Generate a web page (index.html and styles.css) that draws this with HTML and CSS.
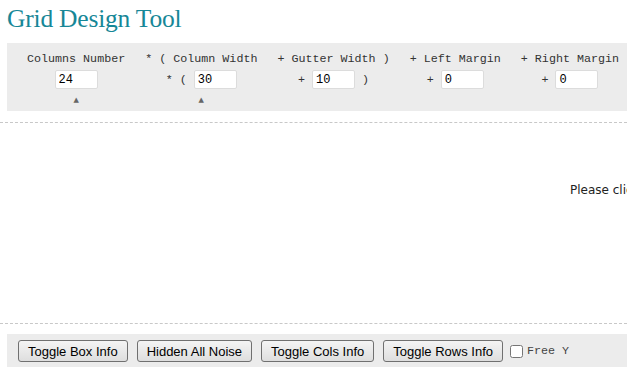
FILE: index.html
```html
<!DOCTYPE html>
<html lang="en">
<head>
    <meta charset="UTF-8">
    <title>Grid Design Tool</title>
    <link rel="stylesheet" href="styles.css">
</head>
<body>
    <h1 class="title">Grid Design Tool</h1>

    <div class="settings">
        <div class="field">
            <div class="label">Columns Number</div>
            <div class="entry"><input type="text" value="24"></div>
            <div class="arrow">&#9650;</div>
        </div>
        <div class="field">
            <div class="label">* ( Column Width</div>
            <div class="entry">* ( <input type="text" value="30"></div>
            <div class="arrow">&#9650;</div>
        </div>
        <div class="field">
            <div class="label">+ Gutter Width )</div>
            <div class="entry">+ <input type="text" value="10"> )</div>
        </div>
        <div class="field">
            <div class="label">+ Left Margin</div>
            <div class="entry">+ <input type="text" value="0"></div>
        </div>
        <div class="field">
            <div class="label">+ Right Margin</div>
            <div class="entry">+ <input type="text" value="0"></div>
        </div>
    </div>

    <div class="stage">
        <p class="hint">Please click the grid to start drawing boxes</p>
    </div>

    <div class="toolbar">
        <button class="btn">Toggle Box Info</button>
        <button class="btn">Hidden All Noise</button>
        <button class="btn">Toggle Cols Info</button>
        <button class="btn">Toggle Rows Info</button>
        <label class="check"><input type="checkbox"> Free Y</label>
    </div>
</body>
</html>
```

FILE: styles.css
```css
body {
    margin: 0;
    padding: 0;
    background: #fff;
    overflow: hidden;
}

.title {
    margin: 0;
    padding: 2px 0 0 7px;
    height: 41px;
    font-family: "Liberation Serif", serif;
    font-weight: normal;
    font-size: 25.5px;
    letter-spacing: -0.2px;
    line-height: 34px;
    color: #178797;
}

.settings {
    display: flex;
    margin-left: 7px;
    padding: 8px 0 2px 10px;
    background: #ececec;
    font-family: "Liberation Mono", monospace;
    font-size: 11.7px;
    color: #333;
    box-sizing: border-box;
    height: 68px;
    white-space: nowrap;
}

.field {
    padding: 0 10px;
    text-align: center;
}

.label {
    height: 17px;
    line-height: 17px;
}

.entry {
    height: 24px;
    line-height: 24px;
}

.entry input {
    width: 43px;
    height: 19px;
    box-sizing: border-box;
    border: 1px solid #dcdcdc;
    border-radius: 2px;
    padding: 1px 3px;
    font-family: "Liberation Mono", monospace;
    font-size: 12px;
    color: #000;
    vertical-align: middle;
    background: #fff;
}

.arrow {
    font-family: "DejaVu Sans", sans-serif;
    font-size: 7px;
    line-height: 16px;
    color: #666;
}

.stage {
    margin-top: 11px;
    height: 200px;
    border-top: 1px dashed #c8c8c8;
    border-bottom: 1px dashed #c8c8c8;
    overflow: hidden;
}

.hint {
    margin: 60px 0 0 570px;
    white-space: nowrap;
    font-family: "DejaVu Sans", sans-serif;
    font-size: 12px;
    color: #222;
}

.toolbar {
    display: flex;
    align-items: center;
    gap: 9px;
    margin: 10px 0 0 7px;
    padding: 6px 0 6px 11px;
    background: #ececec;
    height: 34px;
    box-sizing: border-box;
}

.btn {
    height: 22px;
    padding: 0 9px;
    border: 1px solid #707070;
    border-radius: 3px;
    background: linear-gradient(#f4f4f4, #dedede);
    font-family: "Liberation Sans", sans-serif;
    font-size: 13px;
    color: #000;
}

.check {
    display: flex;
    align-items: center;
    gap: 4px;
    margin-left: -2px;
    font-family: "Liberation Mono", monospace;
    font-size: 11.7px;
    color: #444;
}

.check input {
    margin: 0;
    width: 13px;
    height: 13px;
}
```
